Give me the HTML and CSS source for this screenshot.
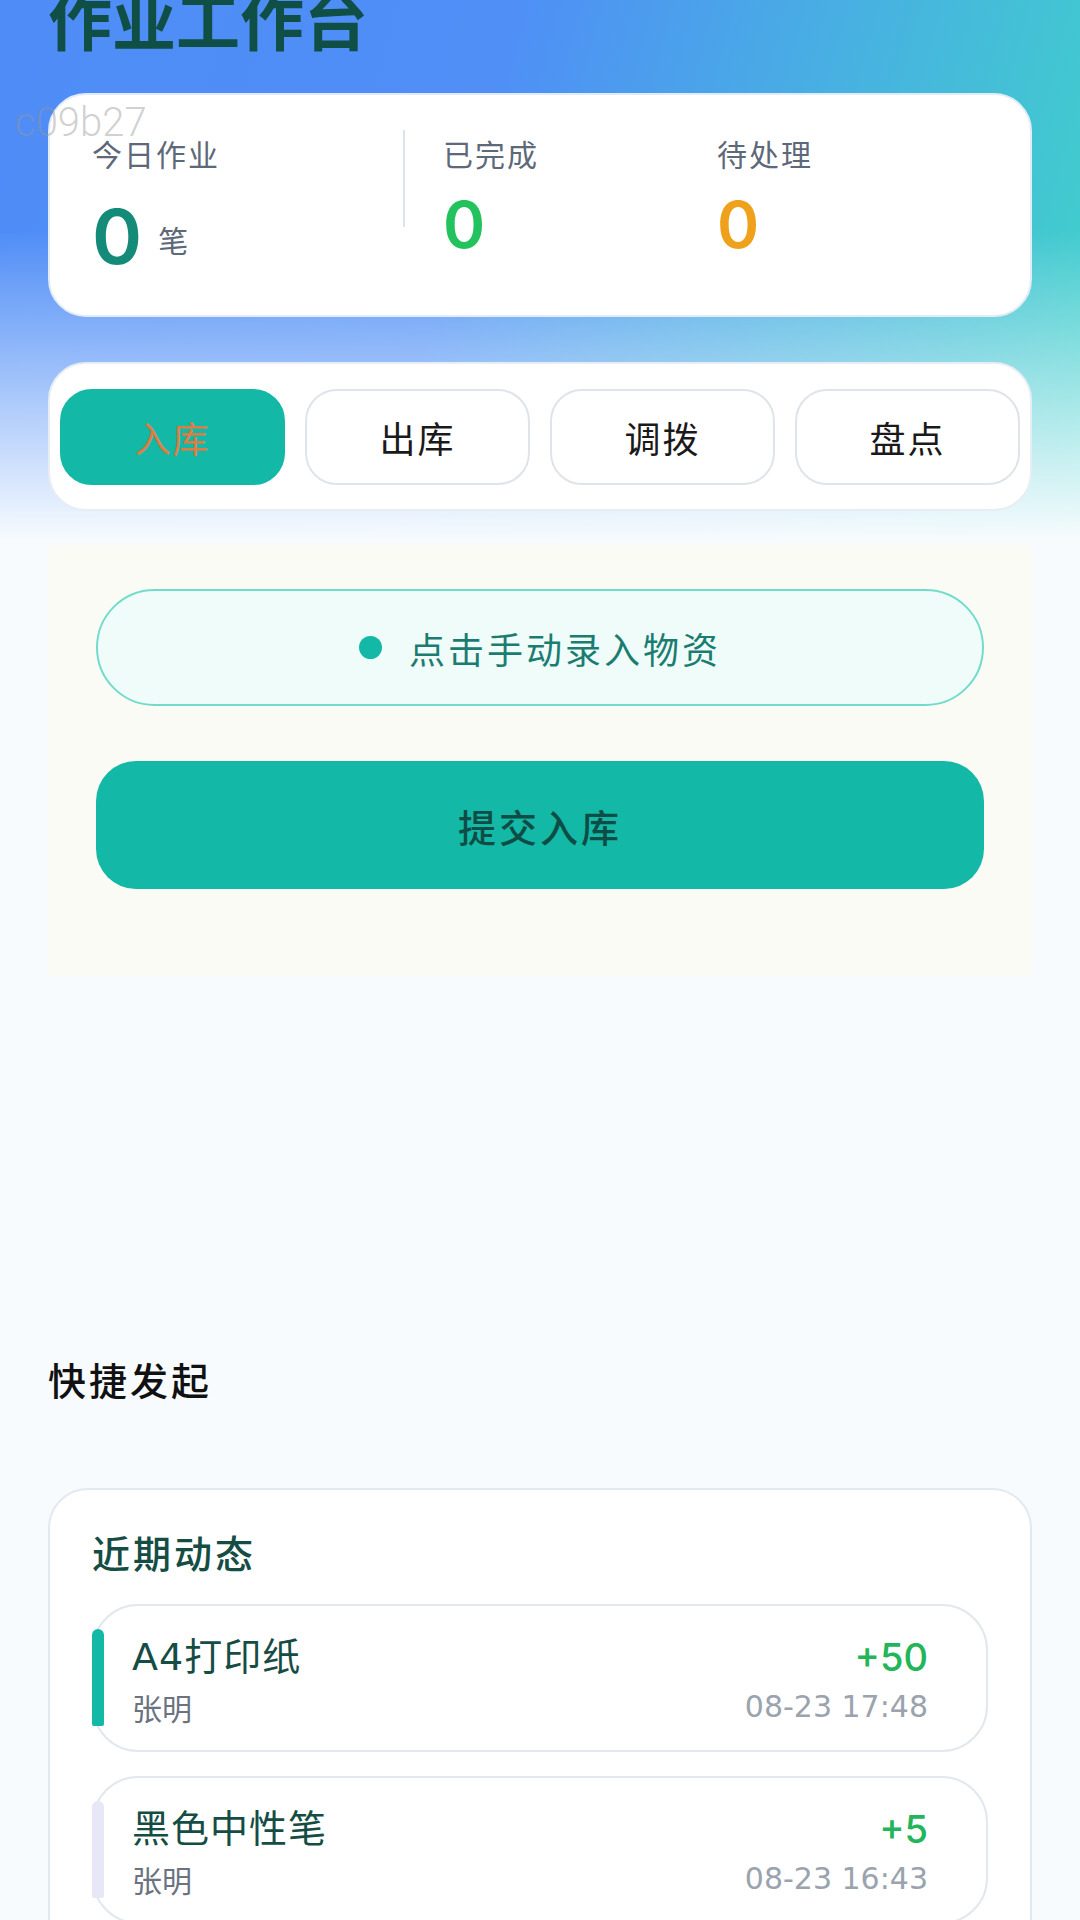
FILE: index.html
```html
<!DOCTYPE html>
<html lang="zh-CN">
<head>
<meta charset="utf-8">
<title>作业工作台</title>
<link rel="stylesheet" href="styles.css">
</head>
<body>
<div class="watermark">c09b27</div>
<main class="page">
  <h1 class="title">作业工作台</h1>

  <section class="stats">
    <div class="stat stat-main">
      <div class="stat-label">今日作业</div>
      <div class="stat-value"><span class="num num-teal">0</span><span class="unit">笔</span></div>
    </div>
    <div class="stat-divider"></div>
    <div class="stat stat-mid">
      <div class="stat-label">已完成</div>
      <div class="stat-value"><span class="num num-green">0</span></div>
    </div>
    <div class="stat stat-last">
      <div class="stat-label">待处理</div>
      <div class="stat-value"><span class="num num-orange">0</span></div>
    </div>
  </section>

  <nav class="tabs">
    <button class="tab tab-active">入库</button>
    <button class="tab">出库</button>
    <button class="tab">调拨</button>
    <button class="tab">盘点</button>
  </nav>

  <section class="panel">
    <div class="manual"><span class="dot"></span><span class="manual-text">点击手动录入物资</span></div>
    <button class="submit">提交入库</button>
  </section>

  <h2 class="section-title">快捷发起</h2>

  <section class="recent">
    <h3 class="recent-title">近期动态</h3>
    <div class="item item-teal">
      <div class="item-left">
        <div class="item-name">A4打印纸</div>
        <div class="item-user">张明</div>
      </div>
      <div class="item-right">
        <div class="item-qty">+50</div>
        <div class="item-time">08-23 17:48</div>
      </div>
    </div>
    <div class="item item-lavender">
      <div class="item-left">
        <div class="item-name">黑色中性笔</div>
        <div class="item-user">张明</div>
      </div>
      <div class="item-right">
        <div class="item-qty">+5</div>
        <div class="item-time">08-23 16:43</div>
      </div>
    </div>
  </section>
</main>
</body>
</html>
```

FILE: styles.css
```css
* { box-sizing: border-box; }

html, body { margin: 0; padding: 0; }

body {
  width: 1080px;
  min-height: 1920px;
  font-family: "Noto Sans CJK SC", "Noto Sans", sans-serif;
  background-color: #f7fbfe;
  background-image:
    linear-gradient(to bottom, rgba(247,251,254,0) 0px, rgba(247,251,254,0) 230px, rgba(247,251,254,0.55) 400px, rgba(247,251,254,1) 540px),
    linear-gradient(105deg, #4f8cf7 0%, #4f8ff6 42%, #47b3e0 72%, #3fd3c8 100%);
  background-size: 100% 560px, 100% 560px;
  background-repeat: no-repeat;
  overflow: hidden;
  position: relative;
}

.watermark {
  position: absolute;
  left: 15px;
  top: 103px;
  font-family: Roboto, "Noto Sans", sans-serif;
  font-weight: 300;
  font-size: 40px;
  line-height: 40px;
  color: rgba(150, 150, 150, 0.45);
  z-index: 5;
}

.page {
  padding: 0 48px;
  display: flex;
  flex-direction: column;
}

.title {
  margin: -15px 0 0 0;
  font-size: 64px;
  line-height: 64px;
  font-weight: 700;
  color: #0f4f46;
}

/* stats card */
.stats {
  margin-top: 44px;
  height: 224px;
  background: #fff;
  border: 2px solid #e2ecf6;
  border-radius: 38px;
  padding: 38px 42px 0 42px;
  display: grid;
  grid-template-columns: 311px 2px 312px 1fr;
  align-items: start;
}

.stat-label {
  font-size: 30px;
  line-height: 40px;
  letter-spacing: 2px;
  color: #5d6878;
}

.stat-value {
  display: flex;
  align-items: flex-end;
}

.num {
  font-family: Inter, "DejaVu Sans", sans-serif;
  font-weight: 600;
}

.stat-main .stat-value { margin-top: 25px; }
.stat-main .num { font-size: 76px; line-height: 76px; }
.stat-mid .stat-value, .stat-last .stat-value { margin-top: 20px; }
.stat-mid .num, .stat-last .num { font-size: 64px; line-height: 64px; }

.stat-mid { padding-left: 38px; }

.num-teal { color: #148a78; }
.num-green { color: #22c35e; }
.num-orange { color: #f0a11c; }

.unit {
  font-size: 30px;
  line-height: 30px;
  color: #5d6878;
  margin-left: 16px;
  margin-bottom: 20px;
}

.stat-divider {
  width: 2px;
  height: 97px;
  margin-top: -3px;
  background: #dbe2ea;
}

/* tabs */
.tabs {
  margin-top: 45px;
  background: #fff;
  border: 2px solid #e6edf4;
  border-radius: 38px;
  padding: 25px 10px 24px 10px;
  display: grid;
  grid-template-columns: repeat(4, 1fr);
  column-gap: 20px;
}

.tab {
  height: 96px;
  border-radius: 32px;
  border: 2px solid #dfe4ea;
  background: #fff;
  font-family: "Noto Sans CJK SC", sans-serif;
  font-size: 36px;
  letter-spacing: 2px;
  color: #1a1a1a;
  padding: 0;
}

.tab-active {
  background: #14b8a6;
  border-color: #14b8a6;
  color: #e07b42;
}

/* input panel */
.panel {
  margin-top: 34px;
  background: #fbfbf6;
  border-radius: 6px;
  padding: 44px 48px 87px 48px;
  display: flex;
  flex-direction: column;
}

.manual {
  height: 117px;
  border: 2px solid #72dccb;
  background: #effcfa;
  border-radius: 60px;
  display: flex;
  align-items: center;
  justify-content: center;
  gap: 27px;
}

.dot {
  width: 23px;
  height: 23px;
  border-radius: 50%;
  background: #14b8a6;
}

.manual-text {
  font-size: 36px;
  letter-spacing: 3px;
  color: #1b7d70;
}

.submit {
  margin-top: 55px;
  height: 128px;
  border: none;
  border-radius: 40px;
  background: #14b8a6;
  font-family: "Noto Sans CJK SC", sans-serif;
  font-size: 38px;
  font-weight: 500;
  letter-spacing: 3px;
  color: #0e4d45;
}

/* quick */
.section-title {
  margin: 375px 0 0 0;
  font-size: 38px;
  line-height: 56px;
  font-weight: 500;
  letter-spacing: 3px;
  color: #111;
}

/* recent */
.recent {
  margin-top: 81px;
  background: #fff;
  border: 2px solid #e2e9f0;
  border-radius: 40px;
  padding: 34px 42px 40px 42px;
  display: flex;
  flex-direction: column;
  gap: 24px;
}

.recent-title {
  margin: 0;
  font-size: 38px;
  line-height: 56px;
  font-weight: 500;
  letter-spacing: 3px;
  color: #154d45;
}

.item {
  position: relative;
  height: 148px;
  border: 2px solid #e2e8ee;
  border-radius: 46px;
  padding: 27px 58px 0 38px;
  display: flex;
  justify-content: space-between;
  align-items: flex-start;
}

.item::before {
  content: "";
  position: absolute;
  left: -2px;
  top: 23px;
  width: 12px;
  height: 97px;
  border-radius: 6px 6px 2px 2px;
}

.item-teal::before { background: #14b8a6; }
.item-lavender::before { background: #e7e7f8; }

.item-left, .item-right {
  display: flex;
  flex-direction: column;
  gap: 6px;
}

.item-right { align-items: flex-end; }

.item-name {
  font-family: "DejaVu Sans", "Noto Sans CJK SC", sans-serif;
  font-size: 38px;
  line-height: 48px;
  letter-spacing: 1px;
  color: #154d45;
}

.item-user {
  font-size: 30px;
  line-height: 40px;
  color: #6b7280;
}

.item-qty {
  font-family: Inter, "DejaVu Sans", sans-serif;
  font-size: 38px;
  line-height: 48px;
  font-weight: 500;
  color: #22b559;
}

.item-time {
  font-family: "DejaVu Sans", sans-serif;
  font-size: 30px;
  line-height: 40px;
  color: #9aa3ae;
}
```
